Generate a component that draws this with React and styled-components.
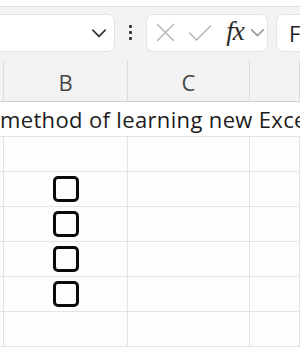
import React from "react";
import styled, { createGlobalStyle } from "styled-components";

const Global = createGlobalStyle`
  html, body { margin: 0; padding: 0; background: #fff; }
  body { width: 300px; height: 350px; overflow: hidden; font-family: "Open Sans", "Noto Sans", sans-serif; }
`;

const Page = styled.div`
  width: 300px;
  height: 350px;
  overflow: hidden;
  display: flex;
  flex-direction: column;
`;

const TopStrip = styled.div`
  height: 6px;
  background: #ffffff;
  border-bottom: 1px solid #dedede;
  flex: none;
`;

const Toolbar = styled.div`
  height: 53px;
  flex: none;
  background: #f3f3f3;
  display: flex;
  align-items: center;
  padding-bottom: 2px;
  box-sizing: border-box;
`;

const Box = styled.div`
  height: 38px;
  box-sizing: border-box;
  background: #ffffff;
  border: 1px solid #e3e3e3;
  border-radius: 7px;
  display: flex;
  align-items: center;
  flex: none;
`;

const NameBox = styled(Box)`
  width: 130px;
  margin-left: -15px;
  justify-content: flex-end;
  padding-right: 6px;
`;

const Dots = styled.div`
  width: 31px;
  display: flex;
  flex-direction: column;
  align-items: center;
  gap: 3px;
  flex: none;
  span {
    width: 3px;
    height: 3px;
    background: #333;
    border-radius: 1px;
  }
`;

const FormulaBox = styled(Box)`
  width: 122px;
  padding-left: 7px;
`;

const ContentBox = styled(Box)`
  width: 40px;
  margin-left: 8px;
  padding-left: 12px;
  font-family: "Open Sans", "Noto Sans", sans-serif;
  font-size: 22px;
  color: #222;
`;

const IconSlot = styled.span`
  display: inline-flex;
  width: ${(p) => p.$w}px;
  flex: none;
  justify-content: center;
  align-items: center;
`;

const Fx = styled.span`
  font-family: "Liberation Serif", "DejaVu Serif", serif;
  font-style: italic;
  font-size: 27px;
  color: #2b2b2b;
  width: 22px;
  flex: none;
  text-align: center;
  letter-spacing: -1px;
  line-height: 1;
  margin-top: -3px;
`;

const Grid = styled.div`
  display: grid;
  grid-template-columns: 4px 124px 122px 1fr;
  grid-template-rows: 42px 35px;
  grid-auto-rows: 35px;
  background: #fdfdfd;
  flex: none;
`;

const HeaderCell = styled.div`
  box-sizing: border-box;
  background: #f2f2f2;
  border-right: 1px solid #dcdcdc;
  border-bottom: 1px solid #d2d2d2;
  display: flex;
  align-items: center;
  justify-content: center;
  font-family: "Open Sans", "Noto Sans", sans-serif;
  font-size: 22px;
  color: #454545;
  padding-top: 2px;
`;

const Cell = styled.div`
  box-sizing: border-box;
  border-right: 1px solid #e4e4e4;
  border-bottom: 1px solid #e4e4e4;
  display: flex;
  align-items: center;
  justify-content: center;
`;

const SpanCell = styled.div`
  grid-column: 1 / -1;
  box-sizing: border-box;
  border-bottom: 1px solid #e4e4e4;
  background: #fff;
  white-space: nowrap;
  overflow: hidden;
  font-family: "Open Sans", "Noto Sans", sans-serif;
  font-size: 22px;
  color: #1c1c1c;
  display: flex;
  align-items: center;
  letter-spacing: 0.35px;
`;

const CheckBox = styled.span`
  width: 26px;
  height: 26px;
  box-sizing: border-box;
  border: 3px solid #0a0a0a;
  border-radius: 5px;
  display: inline-block;
`;

const Chevron = ({ color = "#333", size = 16 }) => (
  <svg width={size} height={size} viewBox="0 0 16 16" fill="none">
    <path d="M2.5 5.5 L8 11 L13.5 5.5" stroke={color} strokeWidth="1.5" strokeLinecap="round" strokeLinejoin="round" />
  </svg>
);

const XIcon = () => (
  <svg width="19" height="19" viewBox="0 0 19 19" fill="none">
    <path d="M1.5 1.5 L17.5 17.5 M17.5 1.5 L1.5 17.5" stroke="#bababa" strokeWidth="1.6" strokeLinecap="round" />
  </svg>
);

const CheckIcon = () => (
  <svg width="24" height="18" viewBox="0 0 24 18" fill="none">
    <path d="M1.5 9 L8.5 16 L22.5 2" stroke="#bababa" strokeWidth="1.6" strokeLinecap="round" strokeLinejoin="round" />
  </svg>
);

const rows = [false, true, true, true, true, false];

export default function App() {
  return (
    <Page>
      <Global />
      <TopStrip />
      <Toolbar>
        <NameBox>
          <Chevron size={18} />
        </NameBox>
        <Dots>
          <span />
          <span />
          <span />
        </Dots>
        <FormulaBox>
          <IconSlot $w={22}><XIcon /></IconSlot>
          <IconSlot $w={48}><CheckIcon /></IconSlot>
          <Fx>fx</Fx>
          <IconSlot $w={23}><Chevron color="#9a9a9a" size={17} /></IconSlot>
        </FormulaBox>
        <ContentBox>F</ContentBox>
      </Toolbar>
      <Grid>
        <HeaderCell />
        <HeaderCell>B</HeaderCell>
        <HeaderCell>C</HeaderCell>
        <HeaderCell />
        <SpanCell>method of learning new Excel functions</SpanCell>
        {rows.map((chk, i) => (
          <React.Fragment key={i}>
            <Cell />
            <Cell>{chk ? <CheckBox /> : null}</Cell>
            <Cell />
            <Cell />
          </React.Fragment>
        ))}
      </Grid>
    </Page>
  );
}
